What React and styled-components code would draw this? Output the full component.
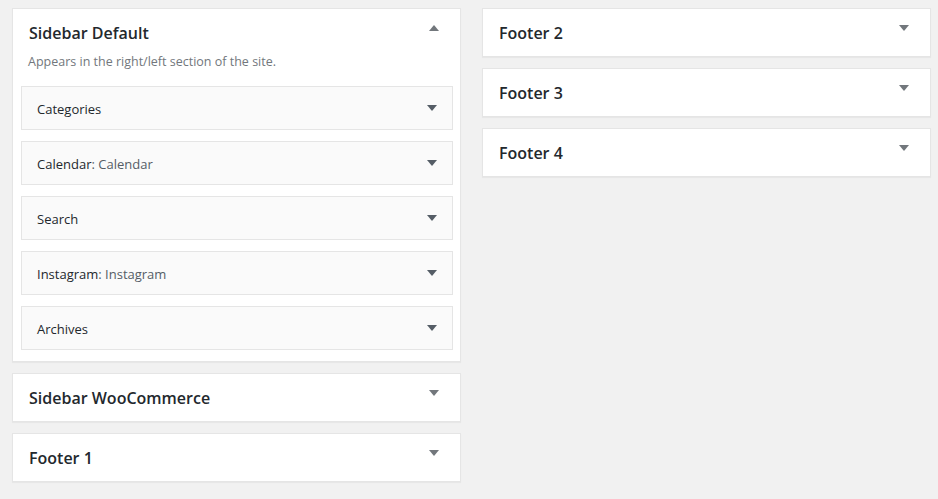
import styled, { createGlobalStyle } from "styled-components"

const GlobalStyle = createGlobalStyle`
    body {
        margin: 0;
        background: #f1f1f1;
        font-family: "Open Sans", "Noto Sans", sans-serif;
        color: #23282d;
    }
`

const sidebarsLeft = [
    {
        name: "Sidebar Default",
        open: true,
        description: "Appears in the right/left section of the site.",
        widgets: [
            { title: "Categories" },
            { title: "Calendar", instance: "Calendar" },
            { title: "Search" },
            { title: "Instagram", instance: "Instagram" },
            { title: "Archives" },
        ],
    },
    { name: "Sidebar WooCommerce" },
    { name: "Footer 1" },
]

const sidebarsRight = [
    { name: "Footer 2" },
    { name: "Footer 3" },
    { name: "Footer 4" },
]

function Arrow({ up, color }) {
    return (
        <svg width="10" height="6" viewBox="0 0 10 6">
            <path d={up ? "M0 6 L5 0 L10 6 Z" : "M0 0 L10 0 L5 6 Z"} fill={color} />
        </svg>
    )
}

function Widget({ widget }) {
    return (
        <WidgetTop>
            <WidgetTitle>
                {widget.title}
                {widget.instance && <InWidget>: {widget.instance}</InWidget>}
            </WidgetTitle>
            <ItemArrow>
                <Arrow color="#555d66" />
            </ItemArrow>
        </WidgetTop>
    )
}

function Sidebar({ sidebar }) {
    return (
        <Holder>
            <SidebarName>
                <Title>{sidebar.name}</Title>
                <HeadArrow>
                    <Arrow up={sidebar.open} color="#72777c" />
                </HeadArrow>
            </SidebarName>
            {sidebar.open && (
                <>
                    <Description>{sidebar.description}</Description>
                    <WidgetList>
                        {sidebar.widgets.map((w) => (
                            <Widget key={w.title} widget={w} />
                        ))}
                    </WidgetList>
                </>
            )}
        </Holder>
    )
}

export default function App() {
    return (
        <>
            <GlobalStyle />
            <Page>
                <Column>
                    {sidebarsLeft.map((s) => (
                        <Sidebar key={s.name} sidebar={s} />
                    ))}
                </Column>
                <Column>
                    {sidebarsRight.map((s) => (
                        <Sidebar key={s.name} sidebar={s} />
                    ))}
                </Column>
            </Page>
        </>
    )
}

const Page = styled.div`
    display: grid;
    grid-template-columns: 449px 449px;
    column-gap: 21px;
    align-items: start;
    padding: 8px 0 0 12px;
    height: 499px;
    box-sizing: border-box;
`

const Column = styled.div`
    display: flex;
    flex-direction: column;
    gap: 11px;
`

const Holder = styled.div`
    background: #fff;
    border: 1px solid #e5e5e5;
    box-shadow: 0 1px 1px rgba(0, 0, 0, 0.04);
`

const SidebarName = styled.div`
    display: flex;
    justify-content: space-between;
    align-items: flex-start;
    padding: 12px 21px 11px 16px;
`

const Title = styled.h2`
    margin: 0;
    font-size: 16px;
    line-height: 24px;
    font-weight: 600;
    color: #23282d;
`

const HeadArrow = styled.span`
    display: flex;
    margin-top: 4px;
`

const Description = styled.div`
    margin: -3px 0 0 15px;
    font-size: 12.5px;
    line-height: 18px;
    color: #72777c;
`

const WidgetList = styled.div`
    display: flex;
    flex-direction: column;
    gap: 11px;
    padding: 15px 7px 11px 8px;
`

const WidgetTop = styled.div`
    display: flex;
    align-items: center;
    justify-content: space-between;
    height: 42px;
    padding: 0 15px;
    background: #fafafa;
    border: 1px solid #e5e5e5;
`

const WidgetTitle = styled.h3`
    margin: 1px 0 0;
    font-size: 13px;
    line-height: 18px;
    font-weight: 500;
    color: #23282d;
`

const InWidget = styled.span`
    font-weight: 400;
    color: #555d66;
`

const ItemArrow = styled.span`
    display: flex;
`
